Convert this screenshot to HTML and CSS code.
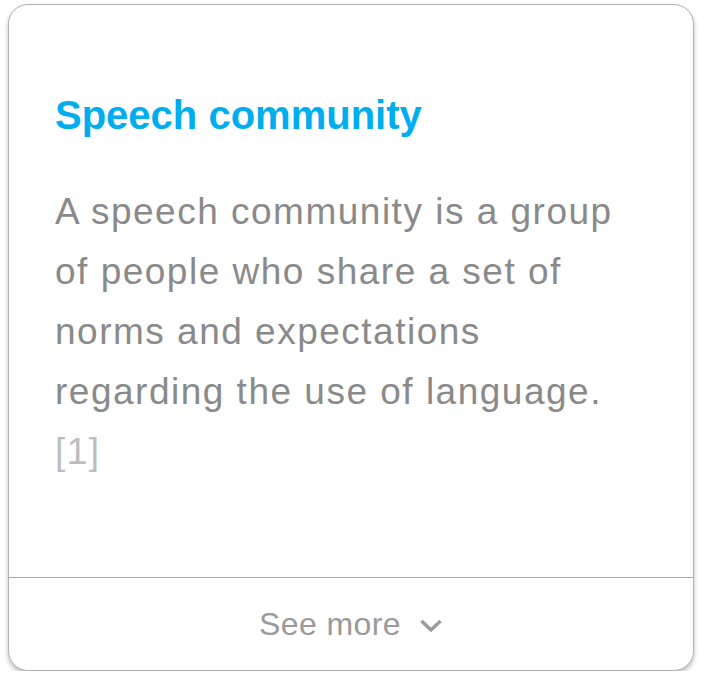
FILE: index.html
```html
<!DOCTYPE html>
<html>
<head>
<meta charset="utf-8">
<link rel="stylesheet" href="styles.css">
</head>
<body>
<div class="card">
  <div class="content">
    <h2 class="title">Speech community</h2>
    <p class="text">A speech community is a group of people who share a set of norms and expectations regarding the use of language. <span class="ref">[1]</span></p>
  </div>
  <div class="footer">
    <span class="more">See more</span>
    <svg class="chev" width="24" height="16" viewBox="0 0 24 16"><path d="M2.5 4 L12 13 L21.5 4" fill="none" stroke="#9a9a9a" stroke-width="3.4"/></svg>
  </div>
</div>
</body>
</html>
```
FILE: styles.css
```css
html, body { margin: 0; padding: 0; background: #fff; }
body { padding: 4px 8px 0 8px; font-family: "Liberation Sans", Arial, sans-serif; }
.card {
  width: 686px;
  height: 667px;
  box-sizing: border-box;
  border: 1px solid #b0b0b0;
  border-radius: 20px;
  box-shadow: 0 3px 5px rgba(0,0,0,0.25);
  display: flex;
  flex-direction: column;
  background: #fff;
}
.content { flex: 1; padding: 88px 46px 0 46px; }
.title {
  margin: 0;
  color: #00aeef;
  font-size: 40px;
  font-weight: bold;
  line-height: 44px;
}
.text {
  margin: 45px 0 0 0;
  color: #8a8a8a;
  font-size: 37px;
  letter-spacing: 1.5px;
  line-height: 60px;
}
.ref { color: #bdbdbd; }
.footer {
  height: 92px;
  border-top: 1px solid #a8a8a8;
  display: flex;
  align-items: center;
  justify-content: center;
  gap: 18px;
}
.more { color: #9a9a9a; font-size: 32px; letter-spacing: 0.4px; }
.chev { margin-top: 2px; }
```
